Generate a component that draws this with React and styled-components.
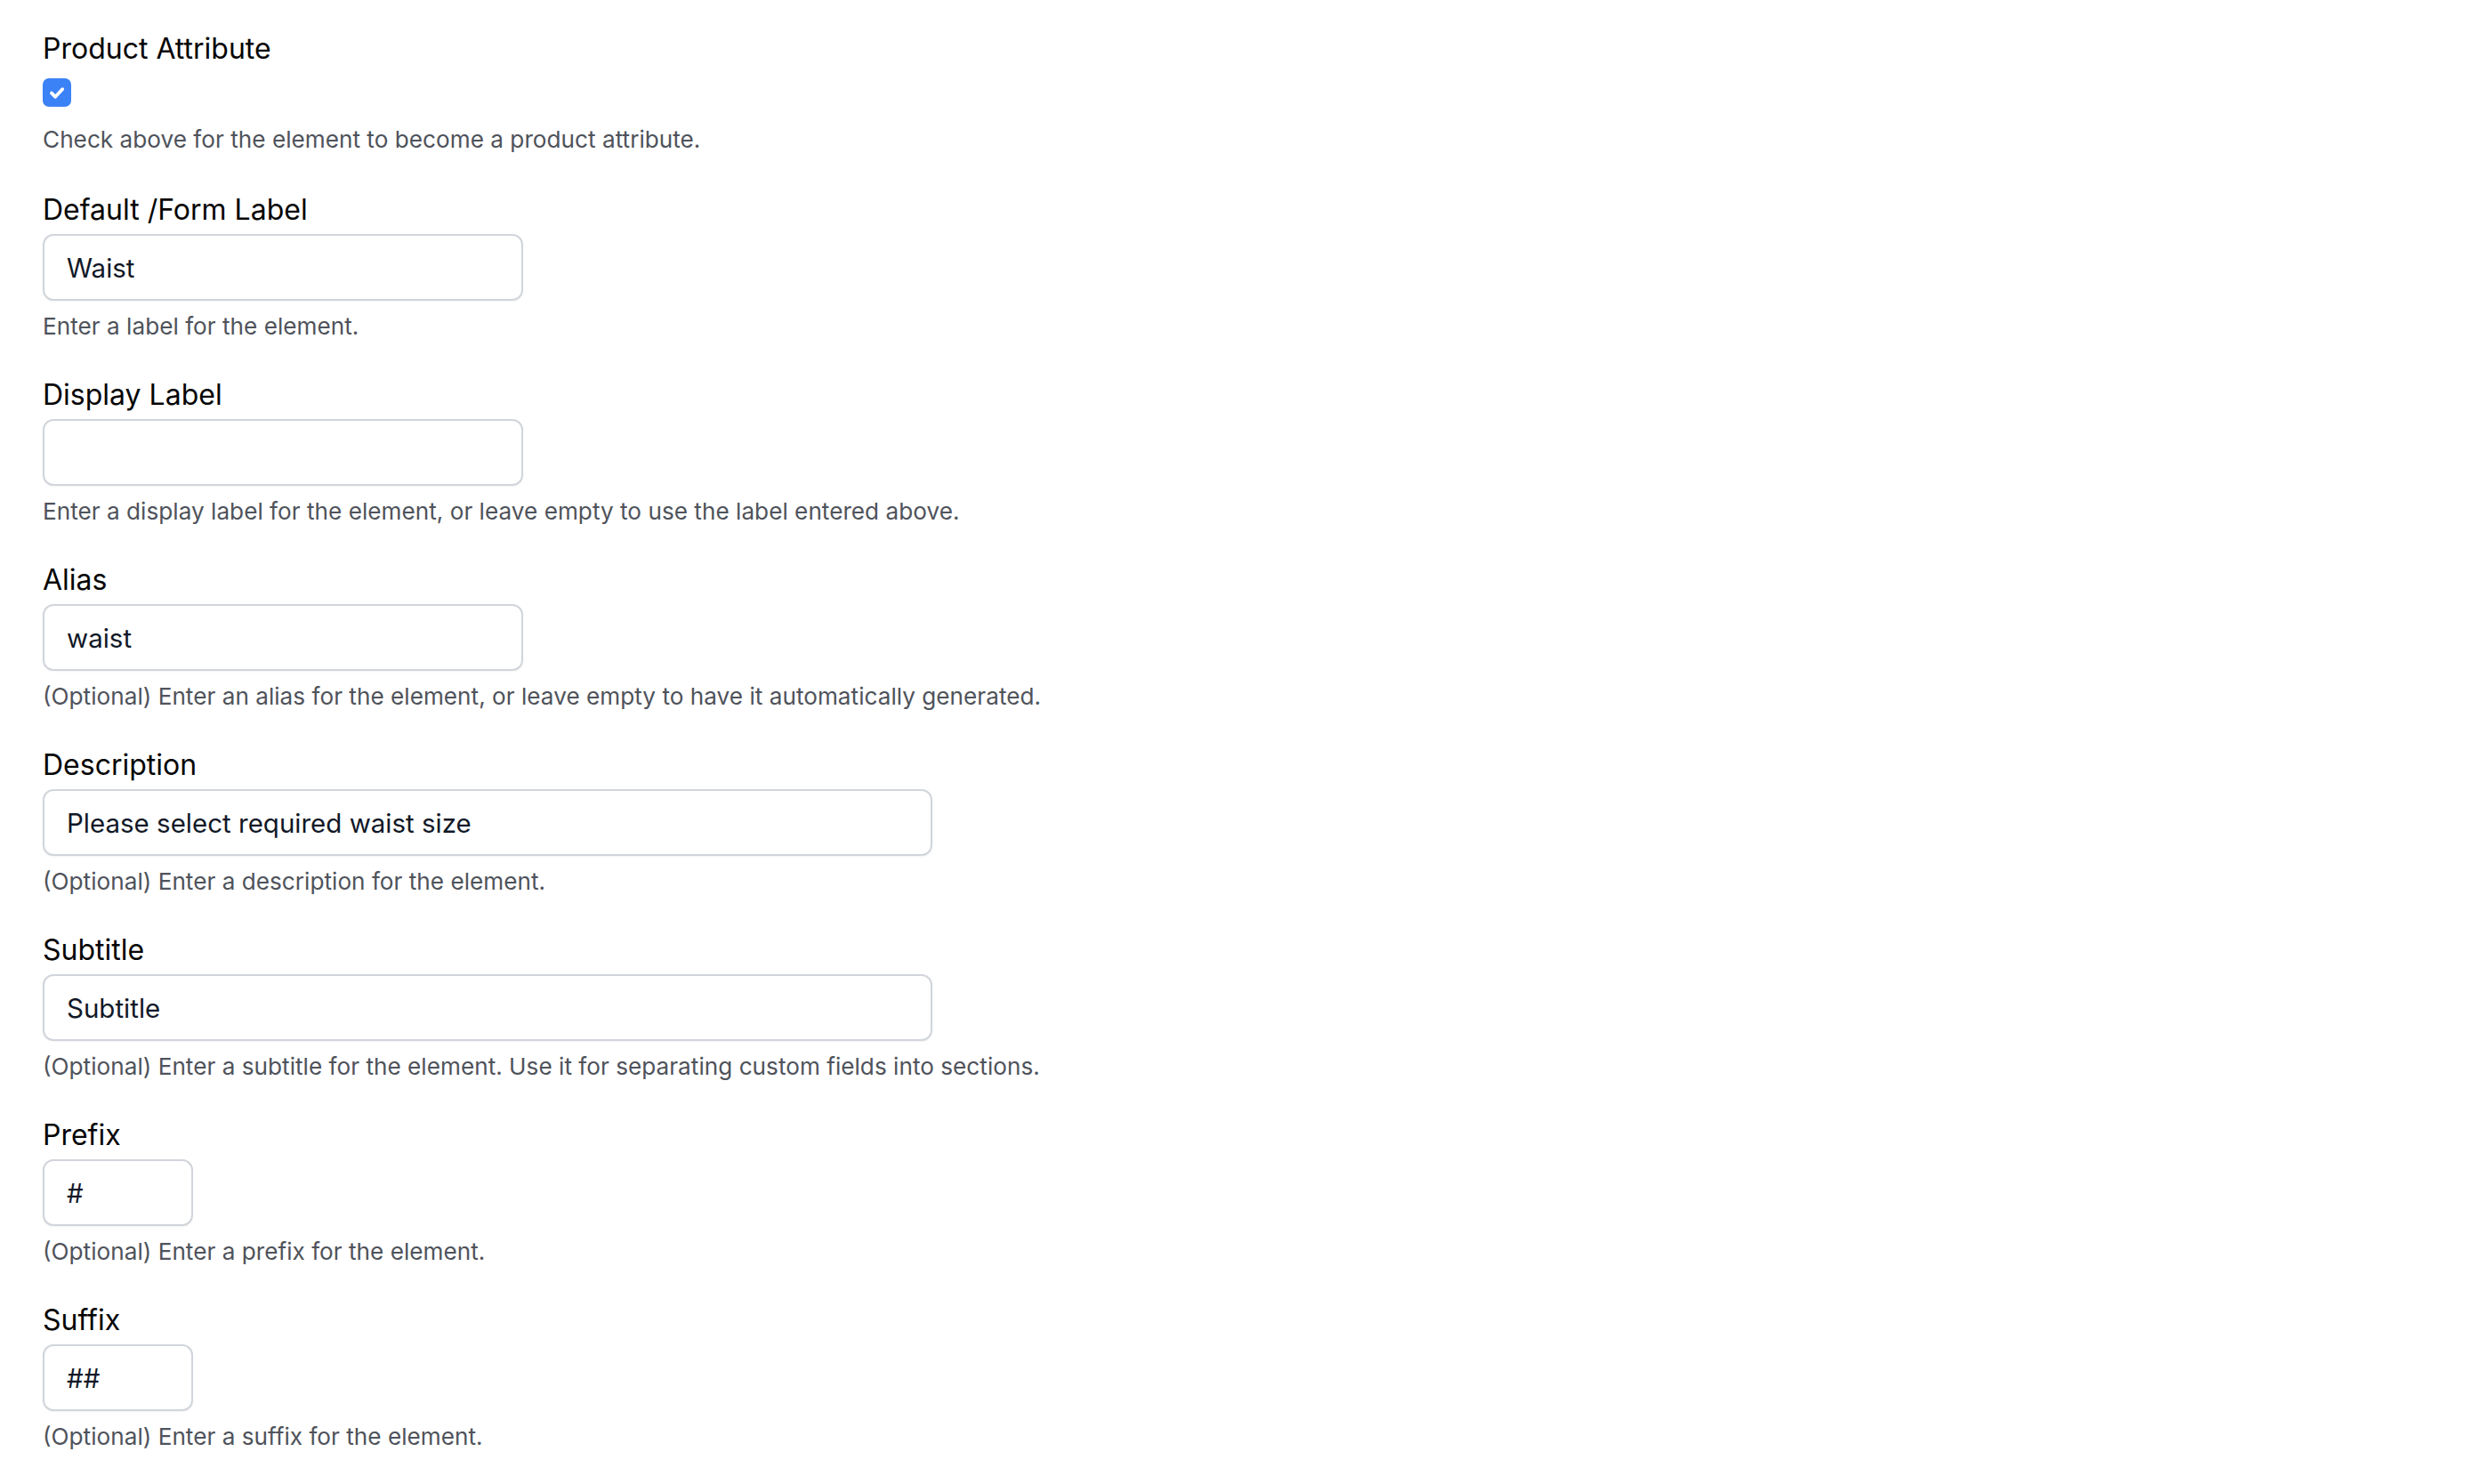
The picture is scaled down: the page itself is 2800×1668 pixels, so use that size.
import React from "react";
import styled, { createGlobalStyle } from "styled-components";

const GlobalStyle = createGlobalStyle`
  html, body {
    margin: 0;
    padding: 0;
    background: #ffffff;
  }
  body {
    font-family: Inter, "Noto Sans", sans-serif;
    -webkit-font-smoothing: antialiased;
  }
  * { box-sizing: border-box; }
`;

const Page = styled.main`
  display: flex;
  flex-direction: column;
  gap: 39px;
  padding: 35px 48px 40px;
`;

const Field = styled.div`
  display: flex;
  flex-direction: column;
  align-items: flex-start;
  margin-bottom: ${(p) => (p.$first ? "2px" : "0")};
`;

const Label = styled.label`
  font-size: 32px;
  line-height: 40px;
  color: #050505;
  margin-bottom: ${(p) => (p.$check ? "13px" : "7px")};
`;

const Input = styled.input`
  width: ${(p) => p.$w}px;
  height: 75px;
  border: 2px solid #d1d5db;
  border-radius: 12px;
  padding: 0 25px;
  font-family: inherit;
  font-size: 29.5px;
  color: #111827;
  background: #fff;
  box-shadow: 0 1px 2px rgba(0, 0, 0, 0.05);
  outline: none;
`;

const Help = styled.p`
  margin: ${(p) => (p.$check ? "19px" : "11px")} 0 0;
  font-size: 26.2px;
  line-height: 36px;
  color: #4f535b;
`;

const CheckBox = styled.span`
  display: block;
  width: 32px;
  height: 32px;
  border-radius: 7px;
  background: #3b82f6;
`;

const fields = [
  { label: "Default /Form Label", value: "Waist", w: 540, help: "Enter a label for the element." },
  { label: "Display Label", value: "", w: 540, help: "Enter a display label for the element, or leave empty to use the label entered above." },
  { label: "Alias", value: "waist", w: 540, help: "(Optional) Enter an alias for the element, or leave empty to have it automatically generated." },
  { label: "Description", value: "Please select required waist size", w: 1000, help: "(Optional) Enter a description for the element." },
  { label: "Subtitle", value: "Subtitle", w: 1000, help: "(Optional) Enter a subtitle for the element. Use it for separating custom fields into sections." },
  { label: "Prefix", value: "#", w: 169, help: "(Optional) Enter a prefix for the element." },
  { label: "Suffix", value: "##", w: 169, help: "(Optional) Enter a suffix for the element." },
];

export default function App() {
  return (
    <>
      <GlobalStyle />
      <Page>
        <Field $first>
          <Label $check>Product Attribute</Label>
          <CheckBox role="checkbox" aria-checked="true">
            <svg width="32" height="32" viewBox="0 0 32 32" fill="none">
              <path d="M10 16.6l4.2 4.2 8-8.6" stroke="#fff" strokeWidth="3.8" strokeLinecap="round" strokeLinejoin="round" />
            </svg>
          </CheckBox>
          <Help $check>Check above for the element to become a product attribute.</Help>
        </Field>
        {fields.map((f) => (
          <Field key={f.label}>
            <Label>{f.label}</Label>
            <Input $w={f.w} defaultValue={f.value} readOnly />
            <Help>{f.help}</Help>
          </Field>
        ))}
      </Page>
    </>
  );
}
